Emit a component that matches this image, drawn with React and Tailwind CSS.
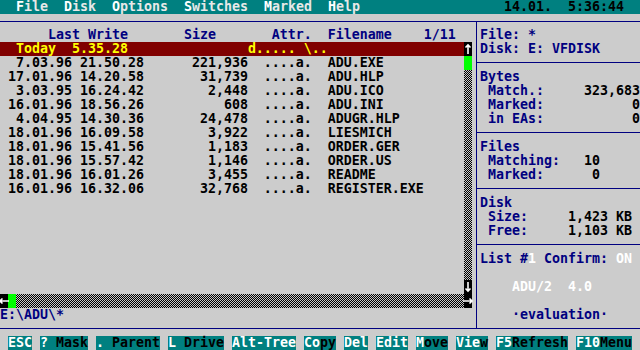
import React from "react";

// text-mode screen: 80 cols x 25 rows, one cell = 8x14 px
const files = [
  ["7.03.96", "21.50.28", "221,936", "ADU.EXE"],
  ["17.01.96", "14.20.58", "31,739", "ADU.HLP"],
  ["3.03.95", "16.24.42", "2,448", "ADU.ICO"],
  ["16.01.96", "18.56.26", "608", "ADU.INI"],
  ["4.04.95", "14.30.36", "24,478", "ADUGR.HLP"],
  ["18.01.96", "16.09.58", "3,922", "LIESMICH"],
  ["18.01.96", "15.41.56", "1,183", "ORDER.GER"],
  ["18.01.96", "15.57.42", "1,146", "ORDER.US"],
  ["18.01.96", "16.01.26", "3,455", "README"],
  ["16.01.96", "16.32.06", "32,768", "REGISTER.EXE"],
];

const fileLine = (f) =>
  f[0].padStart(9) + " " + f[1] + f[2].padStart(13) + "  ....a.  " + f[3];

const menu = [
  ["F", "ile"],
  ["D", "isk"],
  ["O", "ptions"],
  ["S", "witches"],
  ["M", "arked"],
  ["H", "elp"],
];

// [white part, black part]
const keys = [
  ["ESC", ""],
  ["?", " Mask"],
  [".", " Parent"],
  ["L", " Drive"],
  ["Alt-Tree", ""],
  ["Co", "py"],
  ["Del", ""],
  ["Edit", ""],
  ["M", "ove"],
  ["Vie", "w"],
  ["F5", "Refresh"],
  ["F10", "Menu"],
];

// arrow glyphs of the 8x14 font, drawn pointing up and rotated
const Arrow = ({ rot }) => (
  <div className="w-[8px] h-[14px] bg-black">
    <svg width="8" height="14" viewBox="0 0 8 14" style={{ transform: `rotate(${rot}deg)` }}>
      <path d="M4 3v9M1.5 5.5L4 3l2.5 2.5" stroke="#fff" strokeWidth="1.6" fill="none" />
    </svg>
  </div>
);

const Rule = () => (
  <div className="h-[14px] pt-[6px] -ml-[3px]">
    <div className="h-px bg-[#000080]" />
  </div>
);

const Checker = ({ className }) => (
  <div
    className={
      "bg-[image:conic-gradient(#000_25%,#c8c8c8_0_50%,#000_0_75%,#c8c8c8_0)] bg-size-[2px_2px] " +
      className
    }
  />
);

export default function App() {
  return (
    <div className="w-[640px] h-[350px] overflow-hidden bg-[#cccccc] font-['DejaVu_Sans_Mono',monospace] font-bold text-[13.29px] leading-[14px] whitespace-pre text-black">
      {/* menu bar */}
      <div className="h-[14px] bg-[#008080] flex justify-between pl-[16px] pr-[16px]">
        <div className="flex gap-[16px]">
          {menu.map(([k, r]) => (
            <span key={k} className="text-[#e8e8e8]">
              <span className="text-white">{k}</span>
              {r}
            </span>
          ))}
        </div>
        <span>14.01.  5:36:44</span>
      </div>

      <div className="mt-[7px] h-[308px] border-y border-[#000080] flex">
        {/* file list */}
        <div className="w-[476px] pt-[6px]">
          <div className="h-[14px] text-[#000080]">
            {"      Last Write       Size       Attr.  Filename    1/11"}
          </div>
          <div className="flex h-[252px]">
            <div className="w-[464px]">
              <div className="h-[14px] bg-[#800000] text-[#ffff00]">
                {"  Today  5.35.28               d..... \\.."}
              </div>
              {files.map((f) => (
                <div key={f[3]} className="h-[14px]">
                  {fileLine(f)}
                </div>
              ))}
            </div>
            <div className="w-[8px] flex flex-col">
              <Arrow rot={0} />
              <div className="h-[14px] bg-[#00ff00]" />
              <Checker className="flex-1" />
              <Arrow rot={180} />
            </div>
          </div>
          <div className="h-[14px] w-[472px] flex">
            <Arrow rot={-90} />
            <div className="w-[8px] bg-[#00ff00]" />
            <Checker className="flex-1" />
            <Arrow rot={90} />
          </div>
          <div className="h-[14px] text-[#000080]">{"E:\\ADU\\*"}</div>
        </div>

        {/* info panel */}
        <div className="flex-1 border-l border-[#000080] pt-[6px] pl-[3px] text-[#000080]">
          <div className="h-[14px]">File: *</div>
          <div className="h-[14px]">Disk: E: VFDISK</div>
          <Rule />
          <div className="h-[14px]">Bytes</div>
          <div className="h-[14px] flex justify-between pl-[8px]">
            <span>Match.:</span>
            <span className="text-black">323,683</span>
          </div>
          <div className="h-[14px] flex justify-between pl-[8px]">
            <span>Marked:</span>
            <span className="text-black">0</span>
          </div>
          <div className="h-[14px] flex justify-between pl-[8px]">
            <span>in EAs:</span>
            <span className="text-black">0</span>
          </div>
          <Rule />
          <div className="h-[14px]">Files</div>
          <div className="h-[14px]">
            {" Matching:   "}
            <span className="text-black">10</span>
          </div>
          <div className="h-[14px]">
            {" Marked:      "}
            <span className="text-black">0</span>
          </div>
          <Rule />
          <div className="h-[14px]">Disk</div>
          <div className="h-[14px]">
            {" Size:     "}
            <span className="text-black">1,423 KB</span>
          </div>
          <div className="h-[14px]">
            {" Free:     "}
            <span className="text-black">1,103 KB</span>
          </div>
          <Rule />
          <div className="h-[14px]">
            List #<span className="text-white">1</span> Confirm:{" "}
            <span className="text-white">ON</span>
          </div>
          <div className="h-[14px]" />
          <div className="h-[14px] text-white">{"    ADU/2  4.0"}</div>
          <div className="h-[14px]" />
          <div className="h-[14px]">{"    ·evaluation·"}</div>
        </div>
      </div>

      {/* key bar */}
      <div className="mt-[7px] h-[14px] flex gap-[8px] pl-[8px]">
        {keys.map(([w, b]) => (
          <span key={w + b} className="bg-[#008080] text-white">
            {w}
            <span className="text-black">{b}</span>
          </span>
        ))}
      </div>
    </div>
  );
}
